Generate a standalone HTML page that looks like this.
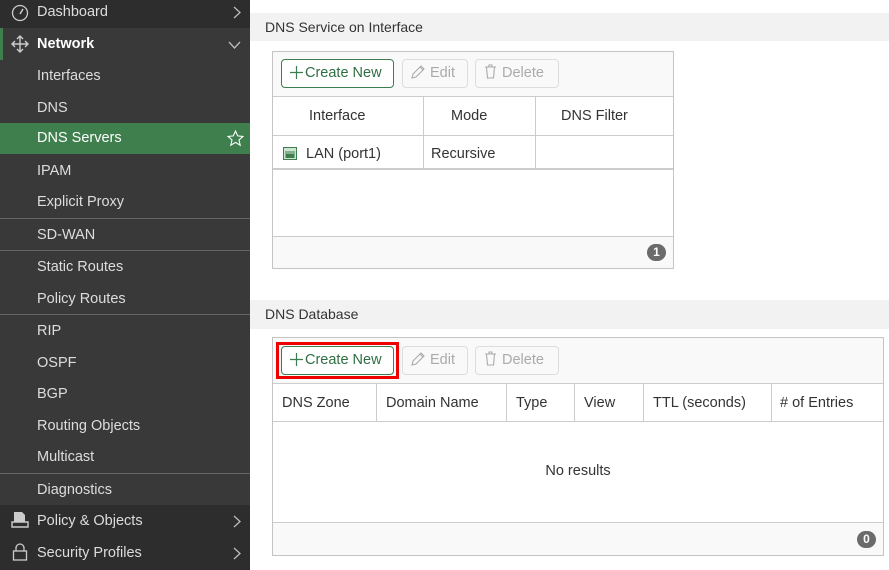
<!DOCTYPE html>
<html><head><style>
*{box-sizing:border-box;margin:0;padding:0}
body{width:889px;height:563px;overflow:hidden;background:#fff;font-family:"Liberation Sans",sans-serif;font-size:14px;color:#333;position:relative}
.sb{position:absolute;left:0;top:0;width:250px;height:563px;background:#2d2d2d}
.it{position:absolute;left:0;width:250px;color:#ddd;font-size:14.5px;line-height:33px;padding-left:37px}
.sub{background:#393939}
.sep{position:absolute;left:0;width:250px;height:1px;background:#666}
.chev{position:absolute;right:9px;top:10px}
.ab{position:absolute}
.band{position:absolute;left:250px;width:639px;background:#f2f2f2;font-size:14px;color:#333;padding-left:15px}
.tbl{position:absolute;border:1px solid #c4c4c4;background:#fff}
.bar{position:absolute;left:0;right:0;background:#f9f9f9}
.btn{position:absolute;height:29px;border:1px solid #ddd;border-radius:4px;line-height:27px;color:#aaa;font-size:14.5px;padding-left:8px;background:#f9f9f9}
.btn svg{vertical-align:-2px;margin-right:5px}
.btn.g{border-color:#3c7d4f;color:#2f6e42;background:#fff}
.btn.g svg{margin-right:2px}
.th{position:absolute;font-size:14.5px;color:#333}
.vl{position:absolute;width:1px;background:#ccc}
.hl{position:absolute;height:1px;background:#ccc}
.badge{position:absolute;width:19px;height:17px;border-radius:9px;background:#6b6b6b;color:#fff;font-size:12px;text-align:center;line-height:17px;font-weight:bold}
</style></head><body>
<div class="sb">
<div class="it" style="top:-4px">Dashboard<svg class="chev" width="8" height="13"><path d="M1 1l6 5.5L1 12" fill="none" stroke="#bbb" stroke-width="1.3"/></svg></div>
<svg class="ab" style="left:11px;top:4px" width="18" height="18"><circle cx="9" cy="9" r="7.5" fill="none" stroke="#ccc" stroke-width="1.3"/><line x1="9" y1="10" x2="12" y2="5" stroke="#ccc" stroke-width="1.5"/></svg>
<div class="it sub" style="top:28px;height:32px;background:#393939;font-weight:bold;color:#fff;line-height:33px">Network<svg class="chev" style="top:13px" width="13" height="8"><path d="M1 1l5.5 6L12 1" fill="none" stroke="#bbb" stroke-width="1.3"/></svg></div>
<div class="ab" style="left:0;top:28px;width:3px;height:32px;background:#3e7f4d"></div>
<svg class="ab" style="left:11px;top:35px" width="18" height="18" stroke="#ccc" stroke-width="1.4" fill="none"><path d="M9 1v16M1 9h16M6 4l3-3 3 3M6 14l3 3 3-3M4 6L1 9l3 3M14 6l3 3-3 3"/></svg>
<div class="ab sub" style="left:0;top:60px;width:250px;height:446px"></div>
<div class="it" style="top:60px">Interfaces</div>
<div class="it" style="top:92px">DNS</div>
<div class="it" style="top:123px;height:31px;background:#3e7f4d;color:#fff;line-height:31px">DNS Servers<svg class="ab" style="right:6px;top:7px" width="17" height="17"><path d="M8.5 1l2.2 4.9 5.3.5-4 3.6 1.2 5.2-4.7-2.8-4.7 2.8 1.2-5.2-4-3.6 5.3-.5z" fill="none" stroke="#fff" stroke-width="1.1"/></svg></div>
<div class="it" style="top:155px">IPAM</div>
<div class="it" style="top:186px">Explicit Proxy</div>
<div class="sep" style="top:218px"></div>
<div class="it" style="top:219px">SD-WAN</div>
<div class="sep" style="top:250px"></div>
<div class="it" style="top:251px">Static Routes</div>
<div class="it" style="top:283px">Policy Routes</div>
<div class="sep" style="top:314px"></div>
<div class="it" style="top:315px">RIP</div>
<div class="it" style="top:347px">OSPF</div>
<div class="it" style="top:378px">BGP</div>
<div class="it" style="top:410px">Routing Objects</div>
<div class="it" style="top:441px">Multicast</div>
<div class="sep" style="top:473px"></div>
<div class="it" style="top:474px">Diagnostics</div>
<div class="it" style="top:505px;background:#2d2d2d">Policy &amp; Objects<svg class="chev" width="8" height="13"><path d="M1 1l6 5.5L1 12" fill="none" stroke="#bbb" stroke-width="1.3"/></svg></div>
<svg class="ab" style="left:11px;top:511px" width="18" height="18"><path d="M3 1h8l3 3v7H3z" fill="#ccc"/><path d="M1 11h16v5H1z" fill="none" stroke="#ccc" stroke-width="1.4"/></svg>
<div class="it" style="top:537px;background:#2d2d2d">Security Profiles<svg class="chev" width="8" height="13"><path d="M1 1l6 5.5L1 12" fill="none" stroke="#bbb" stroke-width="1.3"/></svg></div>
<svg class="ab" style="left:11px;top:542px" width="18" height="20" fill="none" stroke="#ccc" stroke-width="1.3"><path d="M5 9V6a4 4 0 0 1 8 0v3"/><rect x="2.5" y="9" width="13" height="9"/></svg>
</div>

<div class="band" style="top:13px;height:28px;line-height:28px">DNS Service on Interface</div>
<div class="tbl" style="left:272px;top:51px;width:402px;height:218px">
<div class="bar" style="top:0;height:45px"></div>
<div class="btn g" style="left:8px;top:7px;width:113px"><svg width="13" height="13"><path d="M6.5 0v13M0 6.5h13" stroke="#3c7d4f" stroke-width="1.2"/></svg>Create New</div>
<div class="btn" style="left:129px;top:7px;width:66px"><svg width="14" height="14" fill="none" stroke="#aaa" stroke-width="1.1"><path d="M1 13l1-4 8-8 3 3-8 8zM9 2l3 3"/></svg>Edit</div>
<div class="btn" style="left:202px;top:7px;width:84px"><svg width="13" height="15" fill="none" stroke="#aaa" stroke-width="1.1"><path d="M1 3h11M5 3V1h3v2M2.5 3l1 11h6l1-11"/></svg>Delete</div>
<div class="hl" style="left:0;right:0;top:44px"></div>
<div class="bar" style="top:45px;height:39px;background:#fff"></div>
<div class="th" style="left:36px;top:56px">Interface</div>
<div class="th" style="left:178px;top:56px">Mode</div>
<div class="th" style="left:288px;top:56px">DNS Filter</div>
<div class="hl" style="left:0;right:0;top:83px"></div>
<div class="vl" style="left:150px;top:45px;height:71px"></div>
<div class="vl" style="left:262px;top:45px;height:71px"></div>
<svg class="ab" style="left:10px;top:95px" width="14" height="13"><rect x=".5" y=".5" width="13" height="12" fill="#cfe3d3" stroke="#3e7f4d"/><rect x="2.5" y="4" width="9" height="7" fill="#3e7f4d"/><path d="M4 4v3M6 4v3M8 4v3M10 4v3" stroke="#cfe3d3"/></svg>
<div class="th" style="left:33px;top:94px">LAN (port1)</div>
<div class="th" style="left:158px;top:94px">Recursive</div>
<div class="hl" style="left:0;right:0;top:116px;height:2px;background:#ccc"></div>
<div class="bar" style="top:184px;height:32px;border-top:1px solid #ccc"></div>
<div class="badge" style="left:374px;top:192px">1</div>
</div>

<div class="band" style="top:300px;height:29px;line-height:29px">DNS Database</div>
<div class="tbl" style="left:272px;top:337px;width:612px;height:219px">
<div class="bar" style="top:0;height:45px"></div>
<div class="ab" style="left:3px;top:4px;width:123px;height:37px;border:3px solid #e00"></div>
<div class="btn g" style="left:8px;top:8px;width:113px"><svg width="13" height="13"><path d="M6.5 0v13M0 6.5h13" stroke="#3c7d4f" stroke-width="1.2"/></svg>Create New</div>
<div class="btn" style="left:129px;top:8px;width:66px"><svg width="14" height="14" fill="none" stroke="#aaa" stroke-width="1.1"><path d="M1 13l1-4 8-8 3 3-8 8zM9 2l3 3"/></svg>Edit</div>
<div class="btn" style="left:202px;top:8px;width:84px"><svg width="13" height="15" fill="none" stroke="#aaa" stroke-width="1.1"><path d="M1 3h11M5 3V1h3v2M2.5 3l1 11h6l1-11"/></svg>Delete</div>
<div class="hl" style="left:0;right:0;top:45px"></div>
<div class="th" style="left:9px;top:57px">DNS Zone</div>
<div class="th" style="left:113px;top:57px">Domain Name</div>
<div class="th" style="left:243px;top:57px">Type</div>
<div class="th" style="left:311px;top:57px">View</div>
<div class="th" style="left:380px;top:57px">TTL (seconds)</div>
<div class="th" style="left:507px;top:57px"># of Entries</div>
<div class="vl" style="left:103px;top:45px;height:38px"></div>
<div class="vl" style="left:233px;top:45px;height:38px"></div>
<div class="vl" style="left:301px;top:45px;height:38px"></div>
<div class="vl" style="left:370px;top:45px;height:38px"></div>
<div class="vl" style="left:498px;top:45px;height:38px"></div>
<div class="hl" style="left:0;right:0;top:83px"></div>
<div class="th" style="left:0;right:0;top:125px;text-align:center">No results</div>
<div class="bar" style="top:184px;height:33px;border-top:1px solid #ccc"></div>
<div class="badge" style="left:584px;top:193px">0</div>
</div>
</body></html>
